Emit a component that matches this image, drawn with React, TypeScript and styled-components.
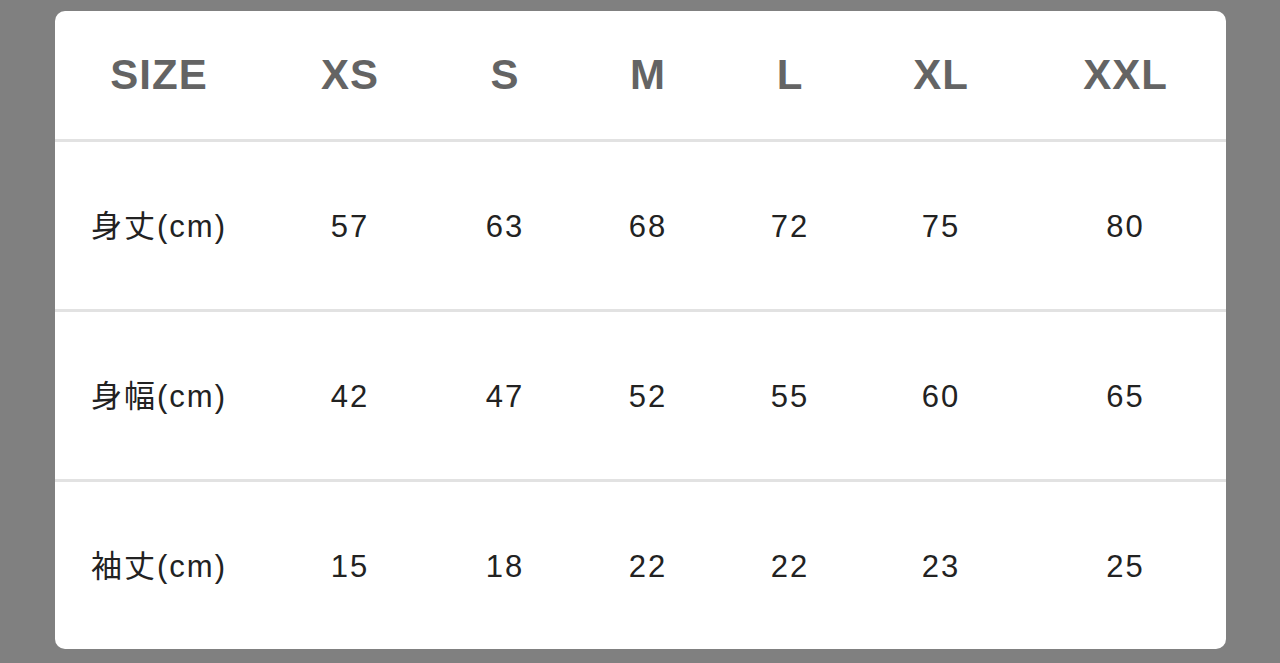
import styled, { createGlobalStyle } from "styled-components"

const GlobalStyle = createGlobalStyle`
  html, body {
    margin: 0;
    padding: 0;
    background-color: #808080;
  }
  body {
    font-family: "Liberation Sans", "Noto Sans CJK JP", sans-serif;
  }
`

const Page = styled.div`
  padding: 11px 0 15px 55px;
`

const Card = styled.div`
  width: 1171px;
  background-color: #ffffff;
  border-radius: 10px;
  overflow: hidden;
`

const Row = styled.div<{ $header?: boolean }>`
  display: grid;
  grid-template-columns: 208px 174px 136px 150px 134px 168px 201px;
  align-items: center;
  height: ${(p) => (p.$header ? "128px" : "167px")};
  border-top: ${(p) => (p.$header ? "none" : "3px solid #e2e2e2")};
`

const HeadCell = styled.div`
  text-align: center;
  font-size: 42px;
  line-height: 1;
  font-weight: 700;
  letter-spacing: 1px;
  color: #646464;
`

const Cell = styled.div`
  text-align: center;
  font-size: 31px;
  line-height: 36px;
  height: 36px;
  padding-top: 2px;
  letter-spacing: 2px;
  color: #222222;
`

const sizes = ["XS", "S", "M", "L", "XL", "XXL"]

const rows = [
  { label: "身丈(cm)", values: [57, 63, 68, 72, 75, 80] },
  { label: "身幅(cm)", values: [42, 47, 52, 55, 60, 65] },
  { label: "袖丈(cm)", values: [15, 18, 22, 22, 23, 25] },
]

const App = () => {
  return (
    <Page>
      <GlobalStyle />
      <Card>
        <Row $header>
          <HeadCell>SIZE</HeadCell>
          {sizes.map((s) => (
            <HeadCell key={s}>{s}</HeadCell>
          ))}
        </Row>
        {rows.map((r) => (
          <Row key={r.label}>
            <Cell>{r.label}</Cell>
            {r.values.map((v, i) => (
              <Cell key={i}>{v}</Cell>
            ))}
          </Row>
        ))}
      </Card>
    </Page>
  )
}

export default App
